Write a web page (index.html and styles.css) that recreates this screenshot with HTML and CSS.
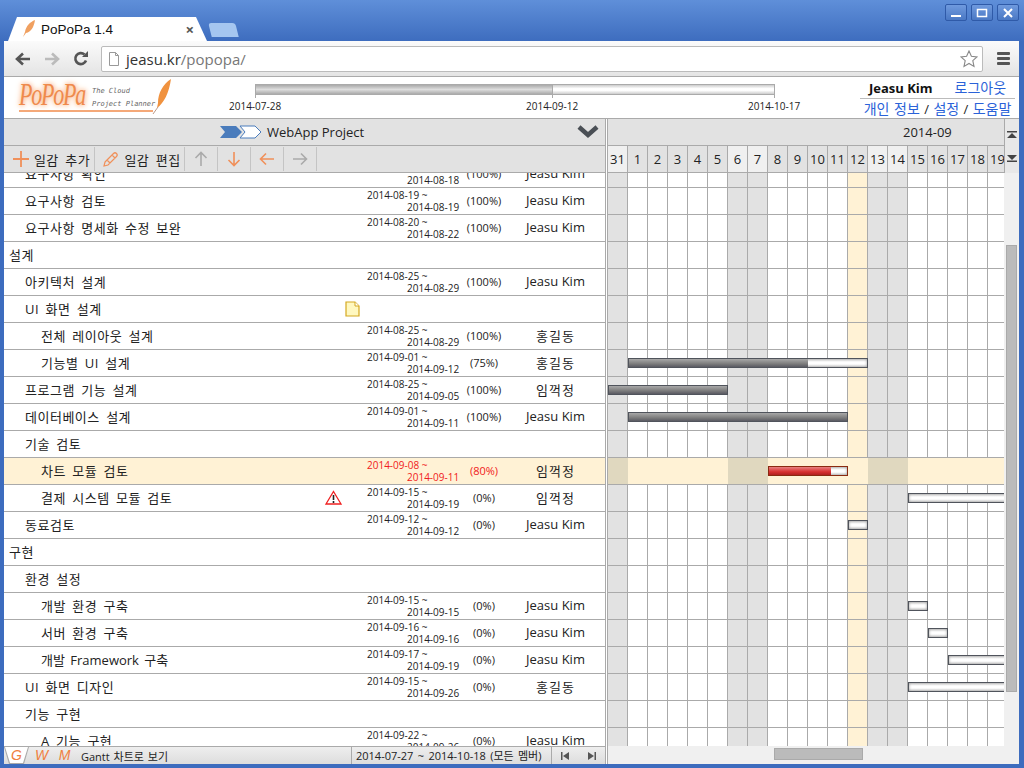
FILE: index.html
```html
<!DOCTYPE html>
<html lang="ko">

<head>
  <meta charset="UTF-8">
  <title>PoPoPa 1.4</title>
  <link rel="stylesheet" href="styles.css">
</head>

<body>
  <div class="titlebar">
    <div class="tab">
      <svg class="tab-icon" width="14" height="18" viewBox="0 0 14 18"><path d="M13 0C8 2 4 6 3 12L1 17l3-4c5-1 8-6 9-13z" fill="#f0a060"/></svg>
      <span class="tab-title">PoPoPa 1.4</span>
      <span class="tab-close">×</span>
    </div>
    <div class="new-tab"></div>
    <div class="win-btns">
      <div class="win-btn"><svg width="12" height="10" viewBox="0 0 12 10"><rect x="1" y="7" width="10" height="2" fill="#fff"/></svg></div>
      <div class="win-btn"><svg width="12" height="10" viewBox="0 0 12 10"><rect x="1.500" y="1.500" width="9" height="7" fill="none" stroke="#fff" stroke-width="1.500"/></svg></div>
      <div class="win-btn"><svg width="12" height="10" viewBox="0 0 12 10"><path d="M2 1l8 8M10 1l-8 8" stroke="#fff" stroke-width="2"/></svg></div>
    </div>
  </div>

  <div class="window">
    <div class="toolbar">
      <svg class="nav-icon" width="16" height="14" viewBox="0 0 16 14"><path d="M15 7H3M8 1.500L2 7l6 5.500" fill="none" stroke="#555" stroke-width="2.600"/></svg>
      <svg class="nav-icon" width="16" height="14" viewBox="0 0 16 14"><path d="M1 7h12M8 1.500L14 7l-6 5.500" fill="none" stroke="#bbb" stroke-width="2.600"/></svg>
      <svg class="nav-icon" width="16" height="16" viewBox="0 0 16 16"><path d="M13 9.500A5.500 5.500 0 1 1 11.500 3.500" fill="none" stroke="#555" stroke-width="2.600"/><path d="M9 6h6V0z" fill="#555"/></svg>
      <div class="omnibox">
        <svg width="12" height="14" viewBox="0 0 12 14"><path d="M1.500.5h6l3 3v10h-9z" fill="#fff" stroke="#999"/><path d="M7.500.5v3h3" fill="none" stroke="#999"/></svg>
        <span class="url">jeasu.kr<span class="url-path">/popopa/</span></span>
        <svg class="star" width="18" height="18" viewBox="0 0 18 18"><path d="M9 1l2.400 5.300 5.600.6-4.200 3.800 1.200 5.700L9 13.500l-5 2.900 1.200-5.700L1 6.900l5.600-.6z" fill="#fff" stroke="#888" stroke-width="1.100"/></svg>
      </div>
      <div class="menu-btn"><span></span><span></span><span></span></div>
    </div>

    <header class="app-header">
      <div class="logo">
        <span class="logo-name">PoPoPa</span>
        <span class="logo-tag">The Cloud<br>Project Planner</span>
        <svg class="logo-pen" width="22" height="36" viewBox="0 0 22 36"><path d="M21 0C13 5 8 14 8 24l-1 5c7-5 12-15 14-29z" fill="#f0923f"/><path d="M8 28L3 35" stroke="#b98"/></svg>
      </div>
      <div class="timeline">
        <div class="timeline-bar"><div class="timeline-done"></div></div>
        <div class="timeline-dates">
          <span>2014-07-28</span>
          <span>2014-09-12</span>
          <span>2014-10-17</span>
        </div>
      </div>
      <div class="user-box">
        <div class="user-line"><b>Jeasu Kim</b><a class="ko" href="#">로그아웃</a></div>
        <div class="user-links"><a class="ko" href="#">개인 정보</a> / <a class="ko" href="#">설정</a> / <a class="ko" href="#">도움말</a></div>
      </div>
    </header>

    <main class="planner">
      <section class="left-pane">
        <div class="project-bar">
          <svg width="42" height="14" viewBox="0 0 42 14"><path d="M0 1h16l6 6-6 6H0l5-6z" fill="#4a7cbc"/><path d="M20 1h15l6 6-6 6H20l5-6-5-6z" fill="#fff" stroke="#4a7cbc"/></svg>
          <span>WebApp Project</span>
          <svg class="collapse" width="22" height="14" viewBox="0 0 22 14"><path d="M2 2l9 8 9-8" fill="none" stroke="#4a4f55" stroke-width="4.500"/></svg>
        </div>
        <div class="tools">
          <button class="tool tool-text"><svg width="16" height="16" viewBox="0 0 16 16"><path d="M8 0v16M0 8h16" stroke="#f0905a" stroke-width="1.800"/></svg>일감 추가</button>
          <button class="tool tool-text"><svg width="16" height="16" viewBox="0 0 16 16"><path d="M2 11L10.500 2.500a2 2 0 0 1 3 3L5 14l-4 1zM9 4l3 3M4 9l3 3" fill="none" stroke="#f0905a" stroke-width="1.200"/></svg>일감 편집</button>
          <button class="tool"><svg width="16" height="16" viewBox="0 0 16 16"><path d="M8 15V2M2.500 7L8 1.500 13.500 7" fill="none" stroke="#aaa" stroke-width="1.600"/></svg></button>
          <button class="tool"><svg width="16" height="16" viewBox="0 0 16 16"><path d="M8 1v13M2.500 9L8 14.500 13.500 9" fill="none" stroke="#f0905a" stroke-width="1.600"/></svg></button>
          <button class="tool"><svg width="16" height="16" viewBox="0 0 16 16"><path d="M15 8H2M7 2.500L1.500 8 7 13.500" fill="none" stroke="#f0905a" stroke-width="1.600"/></svg></button>
          <button class="tool"><svg width="16" height="16" viewBox="0 0 16 16"><path d="M1 8h13M9 2.500L14.500 8 9 13.500" fill="none" stroke="#aaa" stroke-width="1.600"/></svg></button>
        </div>
        <div class="task-scroll">
          <div class="task-list">
            <div class="task lv1"><span class="task-name">요구사항 확인</span><span class="dates">2014-08-18 ~<br><i>2014-08-18</i></span><span class="pct">(100%)</span><span class="owner">Jeasu Kim</span></div>
            <div class="task lv1"><span class="task-name">요구사항 검토</span><span class="dates">2014-08-19 ~<br><i>2014-08-19</i></span><span class="pct">(100%)</span><span class="owner">Jeasu Kim</span></div>
            <div class="task lv1"><span class="task-name">요구사항 명세화 수정 보완</span><span class="dates">2014-08-20 ~<br><i>2014-08-22</i></span><span class="pct">(100%)</span><span class="owner">Jeasu Kim</span></div>
            <div class="task"><span class="task-name">설계</span></div>
            <div class="task lv1"><span class="task-name">아키텍처 설계</span><span class="dates">2014-08-25 ~<br><i>2014-08-29</i></span><span class="pct">(100%)</span><span class="owner">Jeasu Kim</span></div>
            <div class="task lv1"><span class="task-name">UI 화면 설계</span>
              <svg class="note-icon" width="15" height="16" viewBox="0 0 15 16"><path d="M1 1h9l4 4v10H1z" fill="#fff8c0" stroke="#d4a820" stroke-width="1.200"/><path d="M10 1v4h4" fill="#fff" stroke="#d4a820"/></svg></div>
            <div class="task lv2"><span class="task-name">전체 레이아웃 설계</span><span class="dates">2014-08-25 ~<br><i>2014-08-29</i></span><span class="pct">(100%)</span><span class="owner ko">홍길동</span></div>
            <div class="task lv2"><span class="task-name">기능별 UI 설계</span><span class="dates">2014-09-01 ~<br><i>2014-09-12</i></span><span class="pct">(75%)</span><span class="owner ko">홍길동</span></div>
            <div class="task lv1"><span class="task-name">프로그램 기능 설계</span><span class="dates">2014-08-25 ~<br><i>2014-09-05</i></span><span class="pct">(100%)</span><span class="owner ko">임꺽정</span></div>
            <div class="task lv1"><span class="task-name">데이터베이스 설계</span><span class="dates">2014-09-01 ~<br><i>2014-09-11</i></span><span class="pct">(100%)</span><span class="owner">Jeasu Kim</span></div>
            <div class="task lv1"><span class="task-name">기술 검토</span></div>
            <div class="task lv2 late"><span class="task-name">차트 모듈 검토</span><span class="dates">2014-09-08 ~<br><i>2014-09-11</i></span><span class="pct">(80%)</span><span class="owner ko">임꺽정</span></div>
            <div class="task lv2"><span class="task-name">결제 시스템 모듈 검토</span>
              <svg class="warn-icon" width="17" height="15" viewBox="0 0 17 15"><path d="M8.500 1.500L16 14H1z" fill="#fff" stroke="#f02020" stroke-width="1.300"/><path d="M8.500 5v5M8.500 11v2" stroke="#222" stroke-width="1.600"/></svg>
              <span class="dates">2014-09-15 ~<br><i>2014-09-19</i></span><span class="pct">(0%)</span><span class="owner ko">임꺽정</span></div>
            <div class="task lv1"><span class="task-name">동료검토</span><span class="dates">2014-09-12 ~<br><i>2014-09-12</i></span><span class="pct">(0%)</span><span class="owner">Jeasu Kim</span></div>
            <div class="task"><span class="task-name">구현</span></div>
            <div class="task lv1"><span class="task-name">환경 설정</span></div>
            <div class="task lv2"><span class="task-name">개발 환경 구축</span><span class="dates">2014-09-15 ~<br><i>2014-09-15</i></span><span class="pct">(0%)</span><span class="owner">Jeasu Kim</span></div>
            <div class="task lv2"><span class="task-name">서버 환경 구축</span><span class="dates">2014-09-16 ~<br><i>2014-09-16</i></span><span class="pct">(0%)</span><span class="owner">Jeasu Kim</span></div>
            <div class="task lv2"><span class="task-name mixed">개발 Framework 구축</span><span class="dates">2014-09-17 ~<br><i>2014-09-19</i></span><span class="pct">(0%)</span><span class="owner">Jeasu Kim</span></div>
            <div class="task lv1"><span class="task-name">UI 화면 디자인</span><span class="dates">2014-09-15 ~<br><i>2014-09-26</i></span><span class="pct">(0%)</span><span class="owner ko">홍길동</span></div>
            <div class="task lv1"><span class="task-name">기능 구현</span></div>
            <div class="task lv2"><span class="task-name">A 기능 구현</span><span class="dates">2014-09-22 ~<br><i>2014-09-26</i></span><span class="pct">(0%)</span><span class="owner">Jeasu Kim</span></div>
          </div>
        </div>
        <div class="status-bar">
          <div class="view-tab active">G</div>
          <div class="view-tab">W</div>
          <div class="view-tab">M</div>
          <span class="view-name">Gantt 차트로 보기</span>
          <span class="range">2014-07-27 ~ 2014-10-18 (모든 멤버)</span>
          <div class="pager">
            <svg width="8" height="8" viewBox="0 0 8 8"><path d="M0 0h1.500v8H0zM8 0v8L2 4z" fill="#555"/></svg>
            <svg width="8" height="8" viewBox="0 0 8 8"><path d="M8 0H6.500v8H8zM0 0v8l6-4z" fill="#555"/></svg>
          </div>
        </div>
      </section>

      <section class="right-pane">
        <div class="chart-area">
          <div class="month">2014-09</div>
          <div class="days">
            <span class="off">31</span><span>1</span><span>2</span><span>3</span><span>4</span><span>5</span><span class="off">6</span><span class="off">7</span><span>8</span><span>9</span><span>10</span><span>11</span><span>12</span><span class="off">13</span><span class="off">14</span><span>15</span><span>16</span><span>17</span><span>18</span><span>19</span>
          </div>
          <div class="chart-scroll">
            <div class="columns">
              <i class="off"></i><i></i><i></i><i></i><i></i><i></i><i class="off"></i><i class="off"></i><i></i><i></i><i></i><i></i><i class="today"></i><i class="off"></i><i class="off"></i><i></i><i></i><i></i><i></i><i></i>
            </div>
            <div class="chart-rows">
              <div class="chart-row"></div>
              <div class="chart-row"></div>
              <div class="chart-row"></div>
              <div class="chart-row"></div>
              <div class="chart-row"></div>
              <div class="chart-row"></div>
              <div class="chart-row"></div>
              <div class="chart-row"><div class="bar" style="left:20px;width:240px"><div class="bar-done" style="width:75%"></div></div></div>
              <div class="chart-row"><div class="bar" style="left:0;width:120px"><div class="bar-done" style="width:100%"></div></div></div>
              <div class="chart-row"><div class="bar" style="left:20px;width:220px"><div class="bar-done" style="width:100%"></div></div></div>
              <div class="chart-row"></div>
              <div class="chart-row hl"><div class="bar red" style="left:160px;width:80px"><div class="bar-done" style="width:80%"></div></div></div>
              <div class="chart-row"><div class="bar" style="left:300px;width:100px"></div></div>
              <div class="chart-row"><div class="bar" style="left:240px;width:20px"></div></div>
              <div class="chart-row"></div>
              <div class="chart-row"></div>
              <div class="chart-row"><div class="bar" style="left:300px;width:20px"></div></div>
              <div class="chart-row"><div class="bar" style="left:320px;width:20px"></div></div>
              <div class="chart-row"><div class="bar" style="left:340px;width:60px"></div></div>
              <div class="chart-row"><div class="bar" style="left:300px;width:240px"></div></div>
              <div class="chart-row"></div>
              <div class="chart-row"></div>
            </div>
          </div>
          <div class="hscroll"><div class="hthumb"></div></div>
        </div>
        <div class="vscroll">
          <div class="vbtns">
            <svg width="10" height="8" viewBox="0 0 10 8"><path d="M0 0h10v1.500H0zM5 2l5 5H0z" fill="#444"/></svg>
            <svg width="10" height="8" viewBox="0 0 10 8"><path d="M0 8h10V6.500H0zM5 6l5-5H0z" fill="#444"/></svg>
          </div>
          <div class="vtrack"><div class="vthumb"></div></div>
        </div>
      </section>
    </main>
  </div>
</body>

</html>
```

FILE: styles.css
```css
* {
  box-sizing: border-box;
}

html,
body {
  height: 100%;
  margin: 0;
  overflow: hidden;
}

body {
  background: linear-gradient(#5f8fd9, #3d6cbe 42px);
  color: #222;
  display: flex;
  flex-direction: column;
  font-family: "Open Sans", "Noto Sans CJK KR", sans-serif;
  font-size: 13px;
  padding: 1px 5px 4px 4px;
}

/* browser frame */
.titlebar {
  align-items: flex-end;
  display: flex;
  flex: none;
  height: 40px;
}

.tab {
  align-items: center;
  background: #fff;
  clip-path: polygon(0 100%, 9px 0, 188px 0, 199px 100%);
  display: flex;
  height: 24px;
  margin-left: 4px;
  padding: 0 13px 0 14px;
  width: 199px;
}

.tab-icon {
  flex: none;
  margin-right: 5px;
}

.tab-title {
  color: #111;
  flex: 1;
  font-family: "Liberation Sans", sans-serif;
  font-size: 13.500px;
}

.tab-close {
  color: #555;
  font-size: 15px;
  font-weight: 700;
}

.new-tab {
  align-self: flex-end;
  background: #a5c6f0;
  border-radius: 3px 3px 0 0;
  height: 14px;
  margin: 0 0 4px 3px;
  transform: skewX(14deg);
  width: 27px;
}

.win-btns {
  align-self: flex-start;
  display: flex;
  gap: 4px;
  margin: 3px 0 0 auto;
}

.win-btn {
  align-items: center;
  background: linear-gradient(#6f9ade, #4a78c4);
  border: 1px solid #2f5aa8;
  border-radius: 2px;
  display: flex;
  height: 17px;
  justify-content: center;
  width: 22px;
}

.window {
  background: #fff;
  display: flex;
  flex: 1;
  flex-direction: column;
  min-height: 0;
  overflow: hidden;
}

.toolbar {
  align-items: center;
  background: linear-gradient(#fbfbfb, #e4e4e4);
  border-bottom: 1px solid #aaa;
  display: flex;
  flex: none;
  height: 36px;
  padding: 0 9px 0 11px;
}

.nav-icon {
  flex: none;
  margin-right: 13px;
}

.omnibox {
  align-items: center;
  background: #fff;
  border: 1px solid #bbb;
  border-radius: 2px;
  display: flex;
  flex: 1;
  gap: 6px;
  height: 26px;
  margin: 0 14px 0 -1px;
  padding: 0 4px 0 6px;
}

.url {
  color: #333;
  flex: 1;
  font-family: "Open Sans", sans-serif;
  font-size: 15px;
}

.url-path {
  color: #777;
}

.menu-btn {
  display: flex;
  flex-direction: column;
  gap: 2px;
  width: 13px;
}

.menu-btn span {
  background: #555;
  border-radius: 1px;
  height: 3px;
}

/* page header */
.app-header {
  display: flex;
  flex: none;
  height: 41px;
}

.logo {
  border-bottom: 2px solid #f4a878;
  display: flex;
  flex: none;
  height: 35px;
  margin-left: 15px;
  position: relative;
  width: 134px;
}

.logo-name {
  color: #ef8a4c;
  display: inline-block;
  flex: none;
  font-family: "Liberation Serif", serif;
  font-size: 22px;
  font-style: italic;
  height: 33px;
  letter-spacing: -1.200px;
  line-height: 36px;
  text-shadow: 0 0 4px #f8b080, 0 0 6px #fbc8a0;
  transform: scaleY(1.400);
  transform-origin: 0 50%;
  width: 73px;
}

.logo-tag {
  color: #666;
  font-family: "DejaVu Sans Mono", monospace;
  font-size: 7px;
  font-style: italic;
  line-height: 13px;
  padding-top: 8px;
  white-space: nowrap;
}

.logo-pen {
  left: 131px;
  position: absolute;
  top: 2px;
}

.timeline {
  flex: none;
  margin-left: 102px;
  padding-top: 7px;
  width: 520px;
}

.timeline-bar {
  background: linear-gradient(#ccc, #fff 40%, #fff 60%, #ccc);
  border: 1px solid #aaa;
  height: 11px;
  position: relative;
  width: 520px;
}

.timeline-bar::before,
.timeline-bar::after,
.timeline-done::after {
  background: #aaa;
  content: "";
  height: 13px;
  position: absolute;
  top: 0;
  width: 1px;
}

.timeline-bar::before {
  left: -1px;
}

.timeline-bar::after {
  right: -1px;
}

.timeline-done {
  background: linear-gradient(#aaa, #ddd 50%, #aaa);
  height: 100%;
  width: 296px;
}

.timeline-done::after {
  left: 296px;
}

.timeline-dates {
  display: flex;
  font-size: 10px;
  gap: 245px;
  margin-left: -26px;
  margin-top: 4px;
}

.timeline-dates span {
  flex: none;
  white-space: nowrap;
  width: 52px;
}

.timeline-dates span:last-child {
  margin-left: -75px;
}

.user-box {
  flex: none;
  margin-left: auto;
  margin-right: 4px;
  text-align: center;
  width: 155px;
}

.user-line {
  border-bottom: 1px solid #bbb;
  display: flex;
  gap: 22px;
  height: 22px;
  justify-content: center;
  line-height: 22px;
}

.user-line b {
  color: #111;
}

a {
  color: #2a62d8;
  text-decoration: none;
}

a.ko {
  font-size: 14px;
}

.user-links {
  line-height: 19px;
  white-space: nowrap;
  word-spacing: 1px;
}

/* planner */
.planner {
  border-top: 1px solid #aaa;
  display: flex;
  flex: 1;
  min-height: 0;
}

.left-pane {
  border-right: 1px solid #aaa;
  display: flex;
  flex: none;
  flex-direction: column;
  width: 602px;
}

.project-bar {
  align-items: center;
  background: #e2e2e2;
  border-bottom: 1px solid #aaa;
  display: flex;
  flex: none;
  font-size: 13px;
  gap: 5px;
  height: 27px;
  padding-left: 216px;
}

.collapse {
  margin-left: auto;
  margin-right: 6px;
}

.tools {
  background: #e2e2e2;
  border-bottom: 1px solid #aaa;
  display: flex;
  flex: none;
  height: 27px;
  padding: 1px 0;
}

.tool {
  align-items: center;
  background: none;
  border: 0;
  border-right: 1px solid #c4c4c4;
  color: #222;
  display: flex;
  flex: none;
  font-family: inherit;
  font-size: 13px;
  gap: 5px;
  justify-content: center;
  letter-spacing: .5px;
  padding: 0;
  width: 33px;
  word-spacing: 2.500px;
}

.tool-text {
  padding-left: 5px;
  width: 90px;
}

.tool-text:first-child {
  width: 91px;
}

.task-scroll {
  flex: 1;
  min-height: 0;
  overflow: hidden;
}

.task-list {
  margin-top: -12px;
}

.task {
  align-items: center;
  border-bottom: 1px solid #aaa;
  display: flex;
  height: 27px;
  padding: 0 0 2px 5px;
  position: relative;
}

.task.lv1 {
  padding-left: 21px;
}

.task.lv2 {
  padding-left: 37px;
}

.task.late {
  background: #fff2d5;
}

.task-name {
  color: #222;
  letter-spacing: .5px;
  word-spacing: 2.500px;
}

.task-name.mixed {
  letter-spacing: 0;
  word-spacing: 2px;
}

.note-icon {
  left: 341px;
  position: absolute;
  top: 5px;
}

.warn-icon {
  left: 321px;
  position: absolute;
  top: 5px;
}

.dates {
  font-size: 10px;
  left: 363px;
  line-height: 12px;
  position: absolute;
  top: 1px;
  white-space: nowrap;
}

.dates i {
  font-style: normal;
  margin-left: 40px;
}

.pct {
  font-size: 11px;
  left: 450px;
  position: absolute;
  text-align: center;
  width: 60px;
}

.owner {
  left: 509px;
  position: absolute;
  text-align: center;
  width: 85px;
}

.owner.ko {
  letter-spacing: 1px;
}

.late .dates,
.late .pct {
  color: #f02020;
}

.status-bar {
  align-items: center;
  background: linear-gradient(#eee, #ddd);
  border-top: 1px solid #aaa;
  display: flex;
  flex: none;
  font-size: 11px;
  height: 18px;
  position: relative;
}

.view-tab {
  color: #f08040;
  font-family: "Liberation Sans", sans-serif;
  font-size: 14px;
  font-style: italic;
  height: 100%;
  isolation: isolate;
  position: relative;
  text-align: center;
  width: 25px;
}

.view-tab:nth-child(3) {
  margin-left: -2px;
}

.view-tab.active {
  background: #aaa;
  clip-path: polygon(0 0, 100% 0, calc(100% - 5px) 100%, 5px 100%);
}

.view-tab.active::before {
  background: #fff;
  bottom: 1px;
  clip-path: polygon(0 0, 100% 0, calc(100% - 5px) 100%, 5px 100%);
  content: "";
  left: 1px;
  position: absolute;
  right: 1px;
  top: 0;
  z-index: -1;
}

.view-name {
  margin-left: 4px;
  width: 270px;
  word-spacing: 1px;
}

.range {
  border-left: 1px solid #aaa;
  border-right: 1px solid #aaa;
  height: 100%;
  line-height: 17px;
  padding-left: 4px;
  white-space: nowrap;
  width: 201px;
  word-spacing: 1.500px;
}

.pager {
  align-items: center;
  display: flex;
  flex: 1;
  justify-content: space-around;
}

.right-pane {
  border-left: 1px solid #aaa;
  display: flex;
  flex: 1;
  margin-left: 1px;
  min-width: 0;
}

.chart-area {
  display: flex;
  flex: none;
  flex-direction: column;
  overflow: hidden;
  width: 396px;
}

.month {
  background: #e2e2e2;
  border-bottom: 1px solid #aaa;
  flex: none;
  font-size: 13px;
  height: 27px;
  line-height: 26px;
  padding-left: 295px;
}

.days {
  display: flex;
  flex: none;
  height: 27px;
  width: 400px;
}

.days span {
  background: #e2e2e2;
  border-bottom: 1px solid #aaa;
  border-right: 1px solid #aaa;
  flex: none;
  line-height: 26px;
  text-align: center;
  width: 20px;
}

.days .off {
  background: #f0f0f0;
}

.chart-scroll {
  flex: 1;
  min-height: 0;
  overflow: hidden;
  position: relative;
}

.columns {
  display: flex;
  height: 100%;
  left: 0;
  position: absolute;
  top: 0;
  width: 400px;
}

.columns i {
  border-right: 1px solid #aaa;
  flex: none;
  width: 20px;
}

.columns .off {
  background: #e2e2e2;
}

.columns .today {
  background: #fff2d5;
}

.chart-rows {
  margin-top: -12px;
  position: relative;
}

.chart-row {
  border-bottom: 1px solid #aaa;
  height: 27px;
  position: relative;
}

.chart-row.hl {
  background: linear-gradient(to right, #e0d8bf 20px, #fff2d5 20px 120px, #e0d8bf 120px 160px, #fff2d5 160px 260px, #e0d8bf 260px 300px, #fff2d5 300px);
}

.bar {
  background: linear-gradient(#d8d8d8, #fff 35%, #fff 65%, #d8d8d8);
  border: 1px solid #50545c;
  box-shadow: inset 0 0 3px #999;
  height: 10px;
  position: absolute;
  top: 8px;
}

.bar-done {
  background: linear-gradient(#a8a8a8, #808080 55%, #5a5a62);
  height: 100%;
}

.bar.red {
  border-color: #8a2a10;
}

.red .bar-done {
  background: linear-gradient(#e88080, #d83030 60%, #b02020);
}

.hscroll {
  background: #f0f0f0;
  flex: none;
  height: 18px;
  padding: 2px 0 0 166px;
}

.hthumb {
  background: #bbb;
  border: 1px solid #aaa;
  height: 12px;
  width: 89px;
}

.vscroll {
  background: #f0f0f0;
  display: flex;
  flex: 1;
  flex-direction: column;
}

.vbtns {
  align-items: center;
  background: #e8e8e8;
  border-left: 1px solid #aaa;
  display: flex;
  flex: none;
  flex-direction: column;
  gap: 15px;
  height: 54px;
  justify-content: center;
}

.vtrack {
  flex: 1;
  padding: 72px 2px 0;
}

.vthumb {
  background: #bbb;
  border: 1px solid #aaa;
  height: 447px;
}
```
